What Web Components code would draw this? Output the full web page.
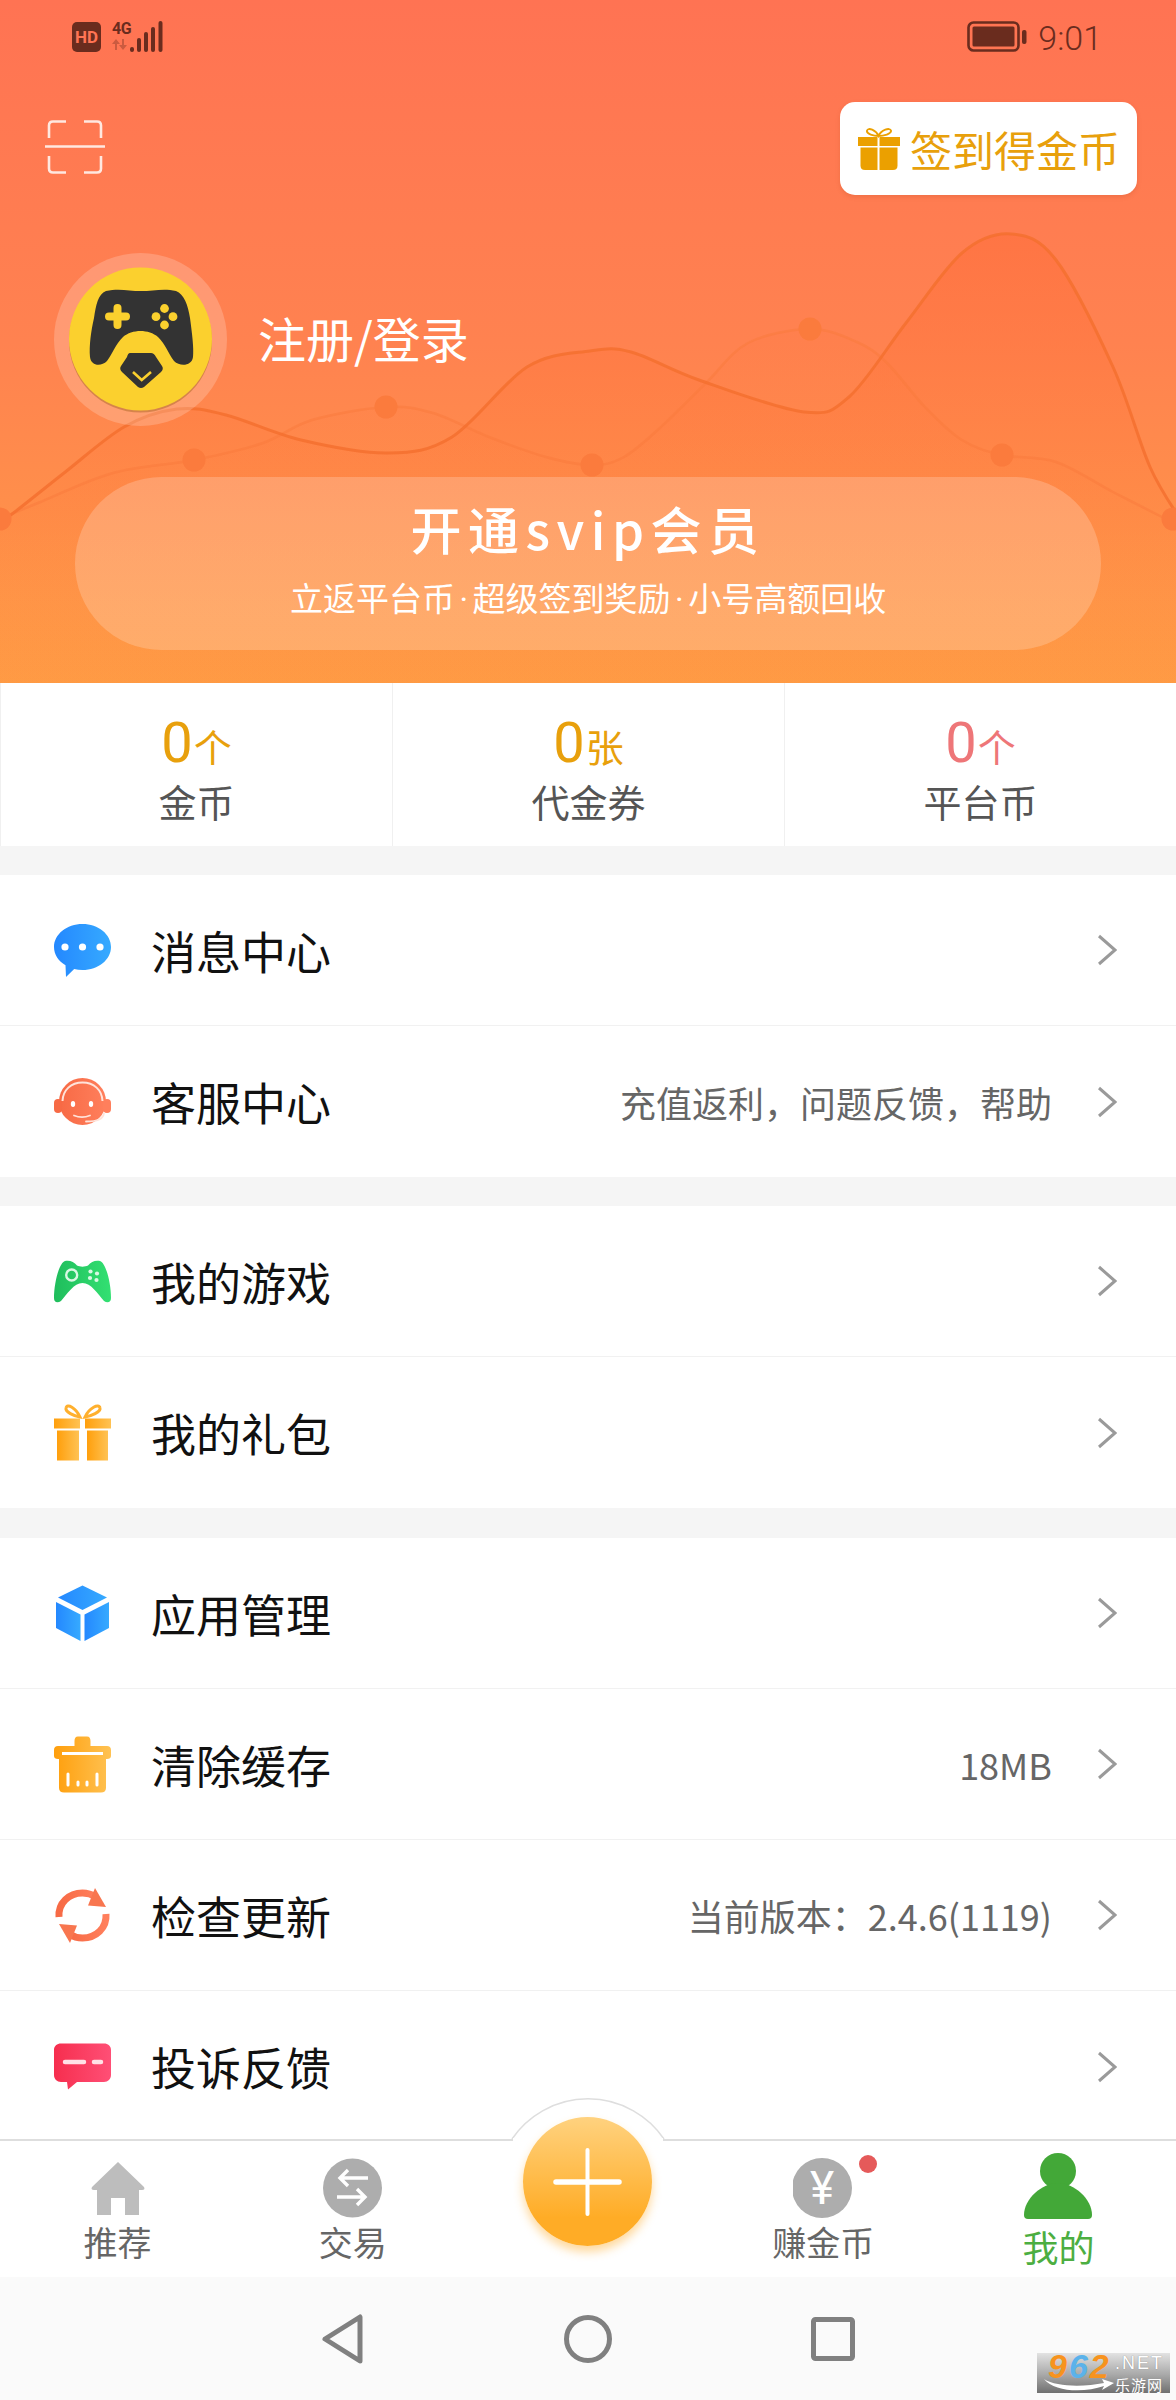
<!DOCTYPE html>
<html lang="zh">
<head>
<meta charset="utf-8">
<title>我的</title>
<style>
  html, body { margin: 0; padding: 0; }
  body {
    width: 1176px;
    height: 2400px;
    display: flex;
    flex-direction: column;
    overflow: hidden;
    background: #f5f5f5;
    font-family: "Noto Sans CJK SC", "Noto Sans", sans-serif;
  }
</style>
</head>
<body>
<svg width="0" height="0" style="position:absolute">
  <defs>
    <linearGradient id="g-blue"><stop offset="0" stop-color="#2488ff"/><stop offset="1" stop-color="#36aaff"/></linearGradient>
    <linearGradient id="g-green"><stop offset="0" stop-color="#1fbd5c"/><stop offset="1" stop-color="#33e072"/></linearGradient>
    <linearGradient id="g-orange"><stop offset="0" stop-color="#ff9f0c"/><stop offset="1" stop-color="#ffc253"/></linearGradient>
    <linearGradient id="g-coral"><stop offset="0" stop-color="#f76a45"/><stop offset="1" stop-color="#ff7f5c"/></linearGradient>
    <linearGradient id="g-pink"><stop offset="0" stop-color="#f62e4e"/><stop offset="1" stop-color="#ff4f76"/></linearGradient>
  </defs>
</svg>

<profile-header>
  <svg slot="avatar" width="173" height="173" viewBox="0 0 173 173">
    <circle cx="86.5" cy="86.5" r="86.5" fill="#fff" fill-opacity=".2"/>
    <circle cx="86.5" cy="88" r="71.5" fill="#a5611c" fill-opacity=".45"/>
    <circle cx="86.5" cy="86" r="71.5" fill="#fbd02e"/>
    <path fill="#333" d="M52 38C65 35 75 38 87 38C99 38 110 35 122 38C130 41 134 52 136 65C138 80 140 95 139 104C138 113 126 114 120 108C114 100 112 92 104 84C95 76 78 76 69 84C61 92 59 100 53 108C47 114 37 113 36 104C35 93 37 78 40 65C42 52 44 41 52 38Z"/>
    <path stroke="#fbd02e" stroke-width="8" stroke-linecap="round" d="M63.5 55V72M55 63.5H72"/>
    <g fill="#fbd02e"><circle cx="110.5" cy="55.5" r="4.4"/><circle cx="119" cy="63.7" r="4.4"/><circle cx="110.5" cy="72" r="4.4"/><circle cx="102" cy="63.7" r="4.4"/></g>
    <path fill="#333" d="M76 100H97Q100 100 102 104L108 113Q110 116 107 119L90 134Q87 136 84 134L68 119Q65 116 67 113L73 104Q74 100 76 100Z"/>
    <path fill="none" stroke="#fbd02e" stroke-width="2.6" d="M79 119L87.7 127L97 119"/>
  </svg>
</profile-header>

<stat-row>
  <stat-cell value="0" unit="个" label="金币"></stat-cell>
  <stat-cell value="0" unit="张" label="代金券"></stat-cell>
  <stat-cell value="0" unit="个" label="平台币" tone="rose"></stat-cell>
</stat-row>

<menu-scroll>
  <menu-group>
    <menu-row label="消息中心">
      <svg slot="icon" viewBox="0 0 57 57"><path fill="url(#g-blue)" d="M28.500 2C44.300 2 57 12.300 57 25C57 37.700 44.300 48 28.500 48C25.500 48 22.800 47.600 20.200 47L12 55L11.500 43.300C4.500 39.100 0 32.500 0 25C0 12.300 12.800 2 28.500 2Z"/><g fill="#fff"><circle cx="11" cy="25" r="3.600"/><circle cx="28.500" cy="25" r="3.600"/><circle cx="46" cy="25" r="3.600"/></g></svg>
    </menu-row>
    <menu-row label="客服中心" hint="充值返利，问题反馈，帮助">
      <svg slot="icon" viewBox="0 0 57 57"><circle cx="28.500" cy="28.500" r="23.500" fill="url(#g-coral)"/><rect x="0" y="26" width="8" height="14" rx="4" fill="#f76a45"/><rect x="49" y="26" width="8" height="14" rx="4" fill="#ff7f5c"/><path fill="none" stroke="#ffe3da" stroke-width="2" d="M8.500 28C9 17 17 9.500 28.500 9.500C40 9.500 48 17 48.500 28"/><g fill="#fff"><ellipse cx="19" cy="31" rx="2.200" ry="3"/><ellipse cx="37" cy="31" rx="2.200" ry="3"/></g><path fill="none" stroke="#ffe3da" stroke-width="1.800" stroke-linecap="round" d="M20 42.500C25 44.500 31 44.500 36 42.500M50 40C49 46 44 48.500 32 48.500"/></svg>
    </menu-row>
  </menu-group>
  <menu-group>
    <menu-row label="我的游戏">
      <svg slot="icon" viewBox="0 0 57 57"><path fill="url(#g-green)" d="M11 8C16 7 20 9 23 12.500C26 14 31 14 34 12.500C37 9 41 7 46 8C52 10 57 30 57 45C57 50 53 50 50 48C44 41 37 30 28.500 30C20 30 13 41 7 48C4 50 0 50 0 45C0 30 5 10 11 8Z"/><circle cx="17.700" cy="22" r="5.500" fill="none" stroke="#d9f8e4" stroke-width="2.400"/><g fill="#d9f8e4"><circle cx="36.500" cy="18.500" r="2.100"/><circle cx="43" cy="20.500" r="2.100"/><circle cx="36" cy="25" r="2.100"/><circle cx="42.500" cy="27" r="2.100"/></g></svg>
    </menu-row>
    <menu-row label="我的礼包">
      <svg slot="icon" viewBox="0 0 57 57"><g fill="url(#g-orange)"><rect x="0" y="14.500" width="26" height="10"/><rect x="31" y="14.500" width="26" height="10"/><rect x="3" y="26.500" width="22" height="30"/><rect x="33" y="26.500" width="21" height="30"/></g><path fill="none" stroke="#ffb02e" stroke-width="3" d="M26 13C20 12 11 8 12 4C13 -1 22 4 26 13ZM31 13C37 12 47 8 46 4C45 -1 35 4 31 13Z"/></svg>
    </menu-row>
  </menu-group>
  <menu-group>
    <menu-row label="应用管理">
      <svg slot="icon" viewBox="0 0 57 57"><g fill="url(#g-blue)"><path d="M28.500 .5L53 12.500L28.500 25L4 12.500Z"/><path d="M2 17L26.500 29.500V56L2 43Z"/><path d="M55 17L30.500 29.500V56L55 43Z"/></g></svg>
    </menu-row>
    <menu-row label="清除缓存" hint="18MB">
      <svg slot="icon" viewBox="0 0 57 57"><path fill="url(#g-orange)" d="M24 .5H33C35.500 .5 36.500 2.500 36.500 5V10H53C55.500 10 57 11.500 57 14V20C57 22 55.500 23 53 23H52V52C52 55 50 56.500 47 56.500H10C7 56.500 5 55 5 52V23H4C1.500 23 0 22 0 20V14C0 11.500 1.500 10 4 10H20.500V5C20.500 2.500 21.500 .5 24 .5Z"/><path stroke="#fff" stroke-width="3" d="M8 17.500H49"/><path stroke="#fff" stroke-width="3" stroke-linecap="round" d="M14 38V49M24 46V49M33 46V49M43 38V49"/></svg>
    </menu-row>
    <menu-row label="检查更新" hint="当前版本：2.4.6(1119)">
      <svg slot="icon" viewBox="0 0 57 57"><g fill="none" stroke="url(#g-coral)" stroke-width="7"><path d="M5 30C4 16 15 6 28.500 6C34 6 38 7.500 42 10"/><path d="M52 27C53 41 42 51 28.500 51C23 51 19 49.500 15 47"/></g><path fill="#f8764f" d="M41 1L52 20L34 18.500Z"/><path fill="#f8764f" d="M16 56L5 37L23 38.500Z"/></svg>
    </menu-row>
    <menu-row label="投诉反馈">
      <svg slot="icon" viewBox="0 0 57 57"><path fill="url(#g-pink)" d="M7 5.500H50C54 5.500 57 8 57 12V37C57 41 54 44 50 44H23L14 51.500L13 44H7C3 44 0 41 0 37V12C0 8 3 5.500 7 5.500Z"/><path stroke="#ffe1e6" stroke-width="4.500" stroke-linecap="round" d="M11 24H30M40 24H47"/></svg>
    </menu-row>
  </menu-group>
</menu-scroll>

<tab-bar>
  <tab-item label="推荐">
    <svg slot="icon" width="60" height="66" viewBox="0 0 60 66"><path fill="#bdbdbd" d="M30 9L56 34Q57.500 37 54 37H51V62Q51 62 49 62H37V45H23V62H11Q9 62 9 62V37H6Q2.500 37 4 34Z"/></svg>
  </tab-item>
  <tab-item label="交易">
    <svg slot="icon" width="60" height="66" viewBox="0 0 60 66"><circle cx="29.500" cy="35" r="29.500" fill="#adadad"/><path fill="none" stroke="#fff" stroke-width="3.400" d="M45 25H17M25 17L17 25L25 33M14 44H42M34 36L42 44L34 52"/></svg>
  </tab-item>
  <tab-spacer></tab-spacer>
  <tab-item label="赚金币" badge>
    <svg slot="icon" width="60" height="66" viewBox="0 0 60 66"><circle cx="29" cy="35" r="30" fill="#adadad"/><text x="29" y="51" text-anchor="middle" font-family="Roboto, sans-serif" font-size="46" font-weight="400" fill="#fff">¥</text></svg>
  </tab-item>
  <tab-item label="我的" active>
    <svg slot="icon" width="68" height="66" viewBox="0 0 68 66"><circle cx="34" cy="18" r="18" fill="#43a838"/><path fill="#43a838" d="M34 30C50 30 68 46 68 62Q68 66 64 66H4Q0 66 0 62C0 46 18 30 34 30Z"/></svg>
  </tab-item>
</tab-bar>

<system-nav></system-nav>

<script>
const headerTemplate = document.createElement('template');
headerTemplate.innerHTML = `
<style>
  :host {
    display: block;
    position: relative;
    height: 683px;
    overflow: hidden;
    background: linear-gradient(180deg, #ff7353 0%, #ff8250 50%, #ff9c45 100%);
    color: #fff;
  }
  #chart { position: absolute; left: 0; top: 0; }
  .content { position: relative; display: flex; flex-direction: column; }
  .status {
    height: 102px;
    display: flex;
    justify-content: space-between;
    align-items: flex-start;
    padding: 21px 74px 0 72px;
    box-sizing: border-box;
    color: #6a2c1e;
  }
  .status .side { display: flex; align-items: flex-start; }
  .hd {
    width: 29px; height: 30px; margin-top: 1px;
    border-radius: 5px;
    background: #6a2c1e;
    color: #ff7454;
    font: 700 17px/30px Roboto, sans-serif;
    text-align: center;
  }
  .net { margin-left: 11px; width: 17px; display: flex; flex-direction: column; }
  .net span { font: 700 16px/15px Roboto, sans-serif; letter-spacing: -.5px; }
  .time { font: 300 34px/34px Roboto, sans-serif; margin-left: 11px; }
  .top {
    height: 93px;
    display: flex;
    justify-content: space-between;
    align-items: center;
    padding: 0 39px 0 45px;
  }
  .scan { margin-top: -3px; }
  .sign {
    display: flex;
    align-items: center;
    gap: 10px;
    width: 297px;
    height: 93px;
    box-sizing: border-box;
    padding-left: 18px;
    background: #fff;
    border-radius: 15px;
    color: #e8a00c;
    font-size: 42px;
    white-space: nowrap;
    box-shadow: 0 2px 4px rgba(190, 80, 40, .25);
  }
  .user {
    margin-top: 58px;
    padding-left: 54px;
    display: flex;
    align-items: center;
    gap: 31px;
    font-size: 48px;
    height: 173px;
  }
  .user span { padding-bottom: 5px; }
  ::slotted(svg) { display: block; }
  .pill {
    margin: 51px 0 0 75px;
    width: 1026px;
    height: 173px;
    border-radius: 87px;
    background: rgba(255, 255, 255, .2);
    display: flex;
    flex-direction: column;
    align-items: center;
  }
  .pill .title {
    margin-top: 18px;
    font-size: 51px;
    line-height: 66px;
    font-weight: 500;
    letter-spacing: 6.5px;
    white-space: nowrap;
  }
  .pill .sub { margin-top: 13px; font-size: 33px; line-height: 46px; white-space: nowrap; }
  .pill .sep { font-family: Roboto, sans-serif; margin: 0 4.5px; }
</style>
<svg id="chart" width="1176" height="683" viewBox="0 0 1176 683">
  <defs>
    <linearGradient id="fill-a" gradientUnits="userSpaceOnUse" x1="0" y1="230" x2="0" y2="600">
      <stop offset="0" stop-color="#ff6a35" stop-opacity=".45"/>
      <stop offset="1" stop-color="#ff7a35" stop-opacity=".04"/>
    </linearGradient>
  </defs>
  <path id="area-b" fill="url(#fill-a)" fill-opacity=".3"/>
  <path id="area-a" fill="url(#fill-a)"/>
  <path id="line-b" fill="none" stroke="#fa7a3c" stroke-opacity=".5" stroke-width="2.500"/>
  <path id="line-a" fill="none" stroke="#f5702f" stroke-opacity=".85" stroke-width="3"/>
  <g id="dots" fill="#fb7b3d"></g>
</svg>
<div class="content">
  <div class="status">
    <div class="side">
      <div class="hd">HD</div>
      <div class="net">
        <span>4G</span>
        <svg width="17" height="13" viewBox="0 0 17 13" style="margin-top:2px"><path fill="#6a2c1e" fill-opacity=".35" d="M4 1L8 6H5V12H3V6H0ZM10 1H12V7H15L11 12L7 7H10Z"/></svg>
      </div>
      <svg width="33" height="31" viewBox="0 0 33 31" style="margin-left:1px"><g fill="#6a2c1e"><rect x="0" y="26" width="4" height="5" rx="2"/><rect x="7" y="17" width="4" height="14" rx="2"/><rect x="14" y="11" width="4" height="20" rx="2"/><rect x="21" y="6" width="4" height="25" rx="2"/><rect x="28.500" y="0" width="4" height="31" rx="2"/></g></svg>
    </div>
    <div class="side">
      <svg width="60" height="31" viewBox="0 0 60 31"><rect x="1.500" y="1.500" width="50" height="28" rx="5" fill="none" stroke="#6a2c1e" stroke-width="2.600"/><rect x="5.500" y="5.500" width="42" height="20" rx="1.500" fill="#6a2c1e"/><rect x="55" y="9" width="4.500" height="14" rx="2" fill="#6a2c1e"/></svg>
      <div class="time">9:01</div>
    </div>
  </div>
  <div class="top">
    <svg class="scan" width="60" height="54" viewBox="0 0 60 54" fill="none" stroke="#ffe8e0" stroke-width="2.600">
      <path d="M21 1.500H8Q4 1.500 4 5.500V18M39 1.500H52Q56 1.500 56 5.500V18M21 52.500H8Q4 52.500 4 48.500V36M39 52.500H52Q56 52.500 56 48.500V36"/>
      <path d="M0 26.500H60"/>
    </svg>
    <div class="sign">
      <svg width="42" height="42" viewBox="0 0 42 42"><g fill="#eba000"><rect x="0" y="9" width="19.500" height="9"/><rect x="21.500" y="9" width="20.500" height="9"/><path d="M2.500 19.500H19.500V42H7Q2.500 42 2.500 37.500Z"/><path d="M21.500 19.500H39.500V37.500Q39.500 42 35 42H21.500Z"/></g><path fill="none" stroke="#eba000" stroke-width="1.800" d="M20.500 8C16 8 8 6 9 2.500C10 -1 18 2 20.500 8C23 2 32 -1 33 2.500C34 6 25 8 20.500 8Z"/></svg>
      <span>签到得金币</span>
    </div>
  </div>
  <div class="user">
    <slot name="avatar"></slot>
    <span>注册/登录</span>
  </div>
  <div class="pill">
    <div class="title">开通svip会员</div>
    <div class="sub">立返平台币<span class="sep">·</span>超级签到奖励<span class="sep">·</span>小号高额回收</div>
  </div>
</div>
`;

// line points read off the reference
const LINE_A = [[-6,522],[8,517],[64,473],[124,427],[177,409],[226,415],[301,440],[388,453],[452,437],[527,367],[590,351],[631,352],[699,380],[804,412],[849,397],[906,323],[962,253],[1011,234],[1056,260],[1113,367],[1150,467],[1182,522]];
const LINE_B = [[-6,521],[38,503],[113,473],[194,460],[263,443],[312,420],[386,407],[433,413],[489,437],[546,457],[592,465],[624,457],[661,427],[706,383],[748,343],[810,329],[857,342],[887,363],[925,407],[962,440],[1002,455],[1056,462],[1113,492],[1162,517],[1182,526]];
const DOTS = [[0,519],[194,460],[386,407],[592,465],[810,329],[1002,455],[1173,519]];

function smoothPath(pts) {
  let d = `M${pts[0][0]} ${pts[0][1]}`;
  for (let i = 0; i < pts.length - 1; i++) {
    const p0 = pts[i - 1] || pts[i];
    const p1 = pts[i];
    const p2 = pts[i + 1];
    const p3 = pts[i + 2] || p2;
    const c1x = p1[0] + (p2[0] - p0[0]) / 6;
    const c1y = p1[1] + (p2[1] - p0[1]) / 6;
    const c2x = p2[0] - (p3[0] - p1[0]) / 6;
    const c2y = p2[1] - (p3[1] - p1[1]) / 6;
    d += `C${c1x.toFixed(1)} ${c1y.toFixed(1)} ${c2x.toFixed(1)} ${c2y.toFixed(1)} ${p2[0]} ${p2[1]}`;
  }
  return d;
}

class ProfileHeader extends HTMLElement {
  constructor() {
    super();
    this._shadowRoot = this.attachShadow({ mode: 'open' });
    this._shadowRoot.appendChild(headerTemplate.content.cloneNode(true));
  }

  connectedCallback() {
    const root = this._shadowRoot;
    const lineA = smoothPath(LINE_A);
    const lineB = smoothPath(LINE_B);
    root.querySelector('#line-a').setAttribute('d', lineA);
    root.querySelector('#line-b').setAttribute('d', lineB);
    root.querySelector('#area-a').setAttribute('d', `${lineA}V683H-6Z`);
    root.querySelector('#area-b').setAttribute('d', `${lineB}V683H-6Z`);
    root.querySelector('#dots').innerHTML = DOTS
      .map(([x, y]) => `<circle cx="${x}" cy="${y}" r="11.500"/>`)
      .join('');
  }
}
customElements.define('profile-header', ProfileHeader);

class StatRow extends HTMLElement {
  constructor() {
    super();
    this.attachShadow({ mode: 'open' }).innerHTML = `
      <style>
        :host { display: grid; grid-template-columns: repeat(3, 1fr); height: 163px; background: #fff; }
      </style>
      <slot></slot>`;
  }
}
customElements.define('stat-row', StatRow);

class StatCell extends HTMLElement {
  constructor() {
    super();
    this.attachShadow({ mode: 'open' }).innerHTML = `
      <style>
        :host {
          display: flex;
          flex-direction: column;
          align-items: center;
          box-sizing: border-box;
          border-left: 1px solid #f0f0f0;
          color: #e8a00c;
        }
        :host([tone="rose"]) { color: #ee7678; }
        .value { margin-top: 27px; height: 66px; line-height: 66px; white-space: nowrap; }
        .num { font: 400 56px/66px Roboto, sans-serif; }
        .unit { font-size: 38px; margin-left: 1px; }
        .label { margin-top: 1px; font-size: 38px; line-height: 48px; color: #555; }
      </style>
      <div class="value"><span class="num"></span><span class="unit"></span></div>
      <div class="label"></div>`;
  }

  connectedCallback() {
    const root = this.shadowRoot;
    root.querySelector('.num').textContent = this.getAttribute('value');
    root.querySelector('.unit').textContent = this.getAttribute('unit');
    root.querySelector('.label').textContent = this.getAttribute('label');
  }
}
customElements.define('stat-cell', StatCell);

class MenuScroll extends HTMLElement {
  constructor() {
    super();
    this.attachShadow({ mode: 'open' }).innerHTML = `
      <style>
        :host { display: block; flex: 1; min-height: 0; overflow: hidden; }
      </style>
      <slot></slot>`;
  }
}
customElements.define('menu-scroll', MenuScroll);

class MenuGroup extends HTMLElement {
  constructor() {
    super();
    this.attachShadow({ mode: 'open' }).innerHTML = `
      <style>
        :host { display: block; margin-top: 29px; background: #fff; }
        :host(:last-child) { margin-top: 30px; }
      </style>
      <slot></slot>`;
  }
}
customElements.define('menu-group', MenuGroup);

class MenuRow extends HTMLElement {
  constructor() {
    super();
    this.attachShadow({ mode: 'open' }).innerHTML = `
      <style>
        :host {
          display: flex;
          align-items: center;
          height: 151px;
          box-sizing: border-box;
          padding: 0 59px 0 54px;
          border-bottom: 1px solid #f1f1f1;
        }
        :host(:last-child) { border-bottom: 0; }
        ::slotted(svg) { display: block; width: 57px; height: 57px; overflow: visible; flex: none; }
        .label { margin-left: 40px; font-size: 45px; color: #111; white-space: nowrap; }
        .hint { margin-left: auto; font-size: 36px; color: #666; white-space: nowrap; }
        .chevron { margin-left: 45px; flex: none; }
        .hint:empty + .chevron { margin-left: 0; }
        .hint:empty { flex: 1; }
      </style>
      <slot name="icon"></slot>
      <span class="label"></span>
      <span class="hint"></span>
      <svg class="chevron" width="20" height="32" viewBox="0 0 20 32"><path fill="none" stroke="#9a9a9a" stroke-width="3" d="M2 2L18 16L2 30"/></svg>`;
  }

  connectedCallback() {
    this.shadowRoot.querySelector('.label').textContent = this.getAttribute('label');
    this.shadowRoot.querySelector('.hint').textContent = this.getAttribute('hint') || '';
  }
}
customElements.define('menu-row', MenuRow);

class TabBar extends HTMLElement {
  constructor() {
    super();
    this.attachShadow({ mode: 'open' }).innerHTML = `
      <style>
        :host {
          display: grid;
          grid-template-columns: repeat(5, 1fr);
          position: relative;
          height: 138px;
          box-sizing: border-box;
          border-top: 2px solid #dedede;
          background: #fff;
        }
        .arc { position: absolute; left: 505px; top: -45px; }
        .fab {
          position: absolute;
          left: 523px; top: -24px;
          width: 129px; height: 129px;
          border-radius: 50%;
          background: linear-gradient(180deg, #ffd27f 0%, #ffac26 78%);
          box-shadow: 0 6px 10px rgba(255, 170, 40, .45);
        }
        .fab svg { display: block; }
      </style>
      <slot></slot>
      <svg class="arc" width="166" height="47" viewBox="0 0 166 47">
        <path fill="#fff" stroke="#dedede" stroke-width="1.500" d="M7 43A92 92 0 0 1 159 43"/>
        <rect x="8" y="42" width="150" height="5" fill="#fff"/>
      </svg>
      <div class="fab">
        <svg width="129" height="129" viewBox="0 0 129 129"><path stroke="#fff" stroke-linecap="round" stroke-width="4" d="M64.500 33V97"/><path stroke="#fff" stroke-linecap="round" stroke-width="5.500" d="M33 65H96"/></svg>
      </div>`;
  }
}
customElements.define('tab-bar', TabBar);

class TabSpacer extends HTMLElement {
  constructor() {
    super();
    this.attachShadow({ mode: 'open' }).innerHTML = '<style>:host { display: block; }</style>';
  }
}
customElements.define('tab-spacer', TabSpacer);

class TabItem extends HTMLElement {
  constructor() {
    super();
    this.attachShadow({ mode: 'open' }).innerHTML = `
      <style>
        :host {
          display: flex;
          flex-direction: column;
          align-items: center;
          padding-top: 12px;
          color: #666;
        }
        .icon { position: relative; height: 66px; display: flex; }
        ::slotted(svg) { display: block; }
        .dot {
          display: none;
          position: absolute;
          left: 66px; top: 2px;
          width: 18px; height: 18px;
          border-radius: 50%;
          background: #e55a5a;
        }
        :host([badge]) .dot { display: block; }
        .label { margin-top: 3px; font-size: 34px; line-height: 40px; }
        :host([active]) { color: #4cae41; }
        :host([active]) .label { margin-top: 7px; font-size: 36px; }
      </style>
      <div class="icon"><slot name="icon"></slot><span class="dot"></span></div>
      <div class="label"></div>`;
  }

  connectedCallback() {
    this.shadowRoot.querySelector('.label').textContent = this.getAttribute('label');
  }
}
customElements.define('tab-item', TabItem);

class SystemNav extends HTMLElement {
  constructor() {
    super();
    this.attachShadow({ mode: 'open' }).innerHTML = `
      <style>
        :host {
          display: flex;
          justify-content: center;
          align-items: center;
          position: relative;
          height: 123px;
          background: #fafafa;
        }
        .key { width: 245px; display: flex; justify-content: center; }
        .mark {
          position: absolute;
          left: 1037px; top: 76px;
          width: 133px; height: 40px;
          background: linear-gradient(180deg, #e2e2e2 0%, #a8a8a8 55%, #707070 100%);
        }
        .digits {
          position: absolute; left: 11px; top: 0;
          font: italic 700 34px/26px "Liberation Sans", sans-serif;
          letter-spacing: 2px;
          color: #f7931e;
        }
        .digits b { color: #5bb2ea; font-weight: 700; }
        .net {
          position: absolute; left: 78px; top: 1px;
          font: 400 18px/18px "Liberation Sans", sans-serif;
          color: #fff;
          letter-spacing: 2px;
          text-shadow: 0 0 1px #777;
        }
        .cn {
          position: absolute; left: 78px; top: 24px;
          font-size: 15px; line-height: 15px;
          letter-spacing: 1px;
          color: #fff;
          white-space: nowrap;
        }
        .swoosh { position: absolute; left: 5px; top: 25px; }
      </style>
      <div class="key"><svg width="44" height="52" viewBox="0 0 44 52"><path fill="none" stroke="#808080" stroke-width="5" stroke-linejoin="round" d="M39 4V48L4 26Z"/></svg></div>
      <div class="key"><svg width="48" height="50" viewBox="0 0 48 50"><circle cx="24" cy="25" r="21.500" fill="none" stroke="#808080" stroke-width="5"/></svg></div>
      <div class="key"><svg width="44" height="44" viewBox="0 0 44 44"><rect x="2.500" y="2.500" width="39" height="39" rx="2" fill="none" stroke="#808080" stroke-width="5"/></svg></div>
      <div class="mark">
        <svg class="swoosh" width="72" height="15" viewBox="0 0 72 15"><path fill="#fff" d="M2 1C14 9 42 9 62 5L60 1L72 5L60 12L62 8C42 15 12 14 2 1Z"/></svg>
        <div class="digits">9<b>6</b>2</div>
        <div class="net">.NET</div>
        <div class="cn">乐游网</div>
      </div>`;
  }
}
customElements.define('system-nav', SystemNav);
</script>
</body>
</html>
